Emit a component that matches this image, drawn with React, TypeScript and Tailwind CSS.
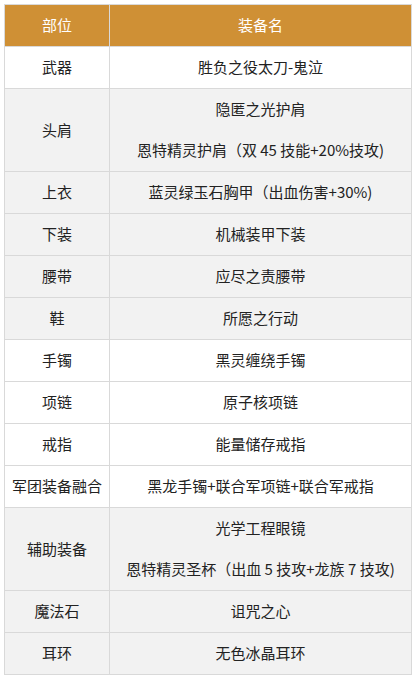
import React from "react";

type Row = { slot: string; items: string[]; gray?: boolean };

const rows: Row[] = [
  { slot: "武器", items: ["胜负之役太刀-鬼泣"] },
  { slot: "头肩", items: ["隐匿之光护肩", "恩特精灵护肩（双 45 技能+20%技攻)"], gray: true },
  { slot: "上衣", items: ["蓝灵绿玉石胸甲（出血伤害+30%)"], gray: true },
  { slot: "下装", items: ["机械装甲下装"], gray: true },
  { slot: "腰带", items: ["应尽之责腰带"], gray: true },
  { slot: "鞋", items: ["所愿之行动"], gray: true },
  { slot: "手镯", items: ["黑灵缠绕手镯"] },
  { slot: "项链", items: ["原子核项链"] },
  { slot: "戒指", items: ["能量储存戒指"] },
  { slot: "军团装备融合", items: ["黑龙手镯+联合军项链+联合军戒指"] },
  { slot: "辅助装备", items: ["光学工程眼镜", "恩特精灵圣杯（出血 5 技攻+龙族 7 技攻)"], gray: true },
  { slot: "魔法石", items: ["诅咒之心"], gray: true },
  { slot: "耳环", items: ["无色冰晶耳环"], gray: true },
];

export default function App() {
  return (
    <div
      className="w-[416px] min-h-[684px] bg-white pt-[4px] px-[4px] text-[15px] text-[#222]"
      style={{ fontFamily: '"Microsoft YaHei", "Noto Sans CJK SC", sans-serif' }}
    >
      <table className="w-[408px] table-fixed border-collapse">
        <colgroup>
          <col className="w-[105px]" />
          <col />
        </colgroup>
        <thead>
          <tr className="bg-[#cf9035] text-white">
            <th className="h-[42px] border border-[#d9d9d9] font-normal">部位</th>
            <th className="h-[42px] border border-[#d9d9d9] font-normal">装备名</th>
          </tr>
        </thead>
        <tbody>
          {rows.map((r) => (
            <tr key={r.slot} className={r.gray ? "bg-[#f2f2f2]" : "bg-white"}>
              <td className="border border-[#d9d9d9] text-center whitespace-nowrap p-0">{r.slot}</td>
              <td className="border border-[#d9d9d9] text-center p-0">
                {r.items.map((t) => (
                  <div key={t} className="h-[41px] flex items-center justify-center whitespace-nowrap">
                    {t}
                  </div>
                ))}
              </td>
            </tr>
          ))}
        </tbody>
      </table>
    </div>
  );
}
